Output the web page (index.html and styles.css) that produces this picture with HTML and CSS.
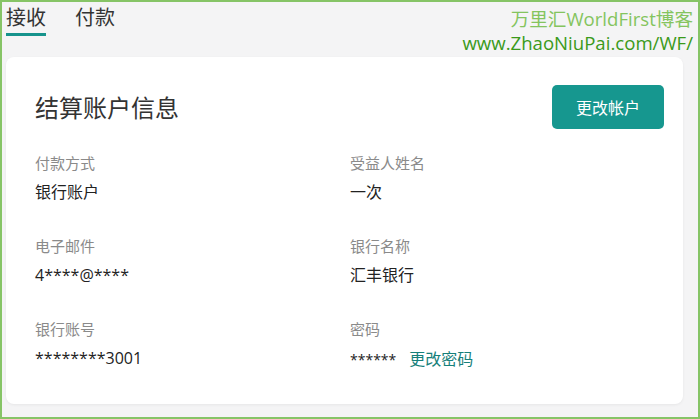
FILE: index.html
```html
<!DOCTYPE html>
<html lang="zh-CN">
<head>
    <meta charset="UTF-8">
    <meta name="viewport" content="width=device-width, initial-scale=1.0">
    <title>结算账户信息</title>
    <link rel="stylesheet" href="styles.css">
</head>
<body>
    <div class="frame">
        <div class="top">
            <div class="tabs">
                <span class="tab active">接收</span>
                <span class="tab">付款</span>
            </div>
            <div class="mark">
                <div class="mark-name">万里汇WorldFirst博客</div>
                <div class="mark-url">www.ZhaoNiuPai.com/WF/</div>
            </div>
        </div>

        <div class="card">
            <div class="card-head">
                <h1>结算账户信息</h1>
                <button class="btn">更改帐户</button>
            </div>
            <div class="fields">
                <div class="field">
                    <div class="label">付款方式</div>
                    <div class="value">银行账户</div>
                </div>
                <div class="field">
                    <div class="label">受益人姓名</div>
                    <div class="value">一次</div>
                </div>
                <div class="field">
                    <div class="label">电子邮件</div>
                    <div class="value">4****@****</div>
                </div>
                <div class="field">
                    <div class="label">银行名称</div>
                    <div class="value">汇丰银行</div>
                </div>
                <div class="field">
                    <div class="label">银行账号</div>
                    <div class="value">********3001</div>
                </div>
                <div class="field">
                    <div class="label">密码</div>
                    <div class="value"><span class="stars">******</span><a class="link" href="#">更改密码</a></div>
                </div>
            </div>
        </div>
    </div>
</body>
</html>
```

FILE: styles.css
```css
* { box-sizing: border-box; }
html, body {
    margin: 0;
    padding: 0;
}
body {
    font-family: "Open Sans", "Noto Sans CJK SC", sans-serif;
    background: #f4f4f5;
    color: #222;
}
.frame {
    width: 700px;
    height: 419px;
    border: 2px solid #86c466;
    padding: 0 15px 0 4px;
    display: flex;
    flex-direction: column;
}
.top {
    display: flex;
    justify-content: space-between;
    height: 55px;
}
.tabs {
    display: flex;
    gap: 29px;
    padding-top: 2px;
}
.tab {
    font-family: "Noto Sans CJK SC", sans-serif;
    font-size: 20px;
    line-height: 26px;
    color: #333;
    height: 32px;
    width: 40px;
}
.tab.active {
    border-bottom: 3px solid #16938c;
}
.mark {
    text-align: right;
    margin-right: -10px;
    padding-top: 5px;
    font-size: 19px;
    line-height: 24px;
}
.mark-name {
    font-family: "Open Sans", "Noto Sans CJK SC", sans-serif;
    color: #84c45e;
    font-size: 18.6px;
}
.mark-url {
    color: #3a9a1a;
    font-size: 18.6px;
}
.card {
    background: #fff;
    border-radius: 8px;
    box-shadow: 0 1px 3px rgba(0,0,0,0.06);
    height: 347px;
    padding: 28px 19px 0 29px;
}
.card-head {
    display: flex;
    justify-content: space-between;
    align-items: flex-start;
    height: 67px;
}
h1 {
    margin: 0;
    padding-top: 6px;
    font-family: "Noto Sans CJK SC", sans-serif;
    font-size: 24px;
    font-weight: normal;
    color: #333;
    line-height: 32px;
}
.btn {
    background: #16978f;
    color: #fff;
    border: none;
    border-radius: 5px;
    width: 112px;
    height: 44px;
    font-family: "Noto Sans CJK SC", sans-serif;
    font-size: 16px;
    cursor: pointer;
}
.fields {
    display: grid;
    grid-template-columns: 315px 1fr;
    row-gap: 32px;
}
.label {
    font-family: "Noto Sans CJK SC", sans-serif;
    font-size: 15px;
    color: #8a8a8a;
    line-height: 22px;
}
.value {
    margin-top: 7px;
    font-size: 16px;
    color: #222;
    line-height: 22px;
}
.stars {
    font-size: 14px;
    margin-right: 13px;
}
.link {
    font-family: "Noto Sans CJK SC", sans-serif;
    color: #16807a;
    text-decoration: none;
}
```
